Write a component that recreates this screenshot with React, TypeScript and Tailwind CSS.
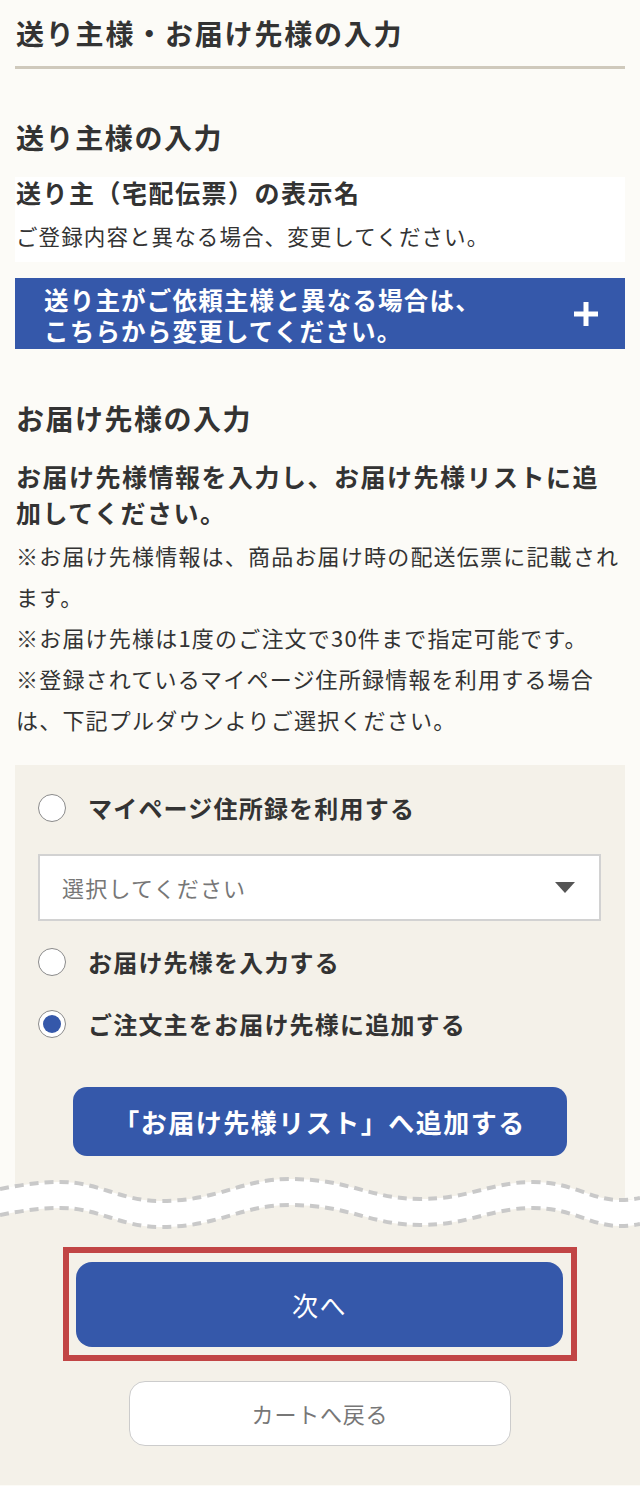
import React from 'react';

const FONT = { fontFamily: '"Noto Sans CJK JP", "Noto Sans", sans-serif' };

function Radio({ checked, label }: { checked?: boolean; label: string }) {
  return (
    <label className="flex h-[40px] items-center gap-[22px]">
      <span className="flex h-[28px] w-[28px] shrink-0 items-center justify-center rounded-full border-[1.5px] border-[#8a8a8a] bg-white">
        {checked && <span className="h-[18px] w-[18px] rounded-full bg-[#3558aa]" />}
      </span>
      <span className="text-[24px] font-bold tracking-[1.2px] text-[#333]">{label}</span>
    </label>
  );
}

function Wave() {
  const top =
    'M0,20 C20,16 40,13 60,13 C100,13 120,32 160,32 C220,32 240,10 290,10 C350,10 370,30 420,30 C470,30 490,13 533,13 C573,13 590,31 620,31 C630,31 635,30 640,29';
  const bottom =
    'M0,46 C20,42 40,39 60,39 C100,39 120,58 160,58 C220,58 240,36 290,36 C350,36 370,56 420,56 C470,56 490,39 533,39 C573,39 590,57 620,57 C630,57 635,56 640,55';
  const band =
    top +
    ' L640,55 C635,56 630,57 620,57 C590,57 573,39 533,39 C490,39 470,56 420,56 C370,56 350,36 290,36 C240,36 220,58 160,58 C120,58 100,39 60,39 C40,39 20,42 0,46 Z';
  return (
    <svg
      className="pointer-events-none absolute left-0 top-[-30px] h-[70px] w-full"
      viewBox="0 0 640 70"
      preserveAspectRatio="none"
    >
      <path d={band} fill="#ffffff" />
      <path d={top} fill="none" stroke="#c9c9c9" strokeWidth={4} strokeDasharray="9 6" />
      <path d={bottom} fill="none" stroke="#c9c9c9" strokeWidth={4} strokeDasharray="9 6" />
    </svg>
  );
}

export default function App() {
  return (
    <div className="min-h-[1486px] w-[640px] bg-[#fcfbf7] text-[#333]" style={FONT}>
      {/* upper part */}
      <div className="px-[15px]">
        <div className="flex h-[69px] items-center border-b-[3px] border-[#cfc9bc] pl-[1px]">
          <h1 className="text-[28px] font-bold leading-none tracking-[1.8px]">送り主様・お届け先様の入力</h1>
        </div>

        <h2 className="mt-[48px] flex h-[40px] items-center pl-[1px] text-[28px] font-bold tracking-[1.6px]">
          送り主様の入力
        </h2>

        <div className="mt-[20px] bg-white pb-[10px] pl-[1px]">
          <p className="flex h-[32px] items-center text-[25px] font-bold tracking-[1.5px]">送り主（宅配伝票）の表示名</p>
          <p className="mt-[11px] flex h-[32px] items-center text-[21.5px] tracking-[1.1px]">
            ご登録内容と異なる場合、変更してください。
          </p>
        </div>

        <button className="mt-[16px] flex h-[71px] w-full items-center justify-between bg-[#3558aa] pl-[29px] pr-[26px] text-left text-white">
          <span className="pt-[2px] text-[24.5px] font-bold leading-[31px] tracking-[1.2px]">
            送り主がご依頼主様と異なる場合は、
            <br />
            こちらから変更してください。
          </span>
          <svg width="26" height="26" viewBox="0 0 26 26">
            <path d="M13 1v24M1 13h24" stroke="#fff" strokeWidth={5} />
          </svg>
        </button>

        <h2 className="mt-[49px] flex h-[40px] items-center pl-[1px] text-[28px] font-bold tracking-[1.5px]">
          お届け先様の入力
        </h2>

        <p className="mt-[20px] max-w-[600px] pl-[1px] text-[25px] font-bold leading-[36px] tracking-[1.5px]">
          お届け先様情報を入力し、お届け先様リストに追加してください。
        </p>

        <div className="mt-[5px] pl-[1px] text-[22px] leading-[41px] tracking-[1.2px]">
          <p>※お届け先様情報は、商品お届け時の配送伝票に記載されます。</p>
          <p>※お届け先様は1度のご注文で30件まで指定可能です。</p>
          <p>※登録されているマイページ住所録情報を利用する場合は、下記プルダウンよりご選択ください。</p>
        </div>

        {/* choice box */}
        <div className="mt-[25px] bg-[#f4f1e9] pb-[43px] pl-[23px] pr-[24px] pt-[23px]">
          <Radio label="マイページ住所録を利用する" />
          <div className="mt-[26px] flex h-[67px] items-center justify-between border-2 border-[#d2d2d2] bg-white pl-[22px] pr-[24px]">
            <span className="text-[22px] tracking-[1.2px] text-[#777]">選択してください</span>
            <svg width="20" height="11" viewBox="0 0 20 11">
              <path d="M0 0h20L10 11z" fill="#555" />
            </svg>
          </div>
          <div className="mt-[21px]">
            <Radio label="お届け先様を入力する" />
          </div>
          <div className="mt-[22px]">
            <Radio checked label="ご注文主をお届け先様に追加する" />
          </div>
          <div className="mt-[43px] flex justify-center">
            <button className="flex h-[69px] w-[494px] items-center justify-center rounded-[14px] bg-[#3558aa] text-[26px] font-bold tracking-[1.5px] text-white">
              「お届け先様リスト」へ追加する
            </button>
          </div>
        </div>
      </div>

      {/* lower part */}
      <div className="relative bg-[#f4f1e9] pb-[39px] pt-[48px]">
        <Wave />
        <div className="flex flex-col items-center">
          <div className="border-[6px] border-[#c14545] pb-[8px] pl-[7px] pr-[8px] pt-[9px]">
            <button className="flex h-[85px] w-[487px] items-center justify-center rounded-[16px] bg-[#3558aa] text-[26px] tracking-[1.5px] text-white">
              次へ
            </button>
          </div>
          <button className="mt-[20px] flex h-[65px] w-[382px] items-center justify-center rounded-[16px] border-[1.5px] border-[#cccccc] bg-white text-[22px] tracking-[0.8px] text-[#777]">
            カートへ戻る
          </button>
        </div>
      </div>
    </div>
  );
}
